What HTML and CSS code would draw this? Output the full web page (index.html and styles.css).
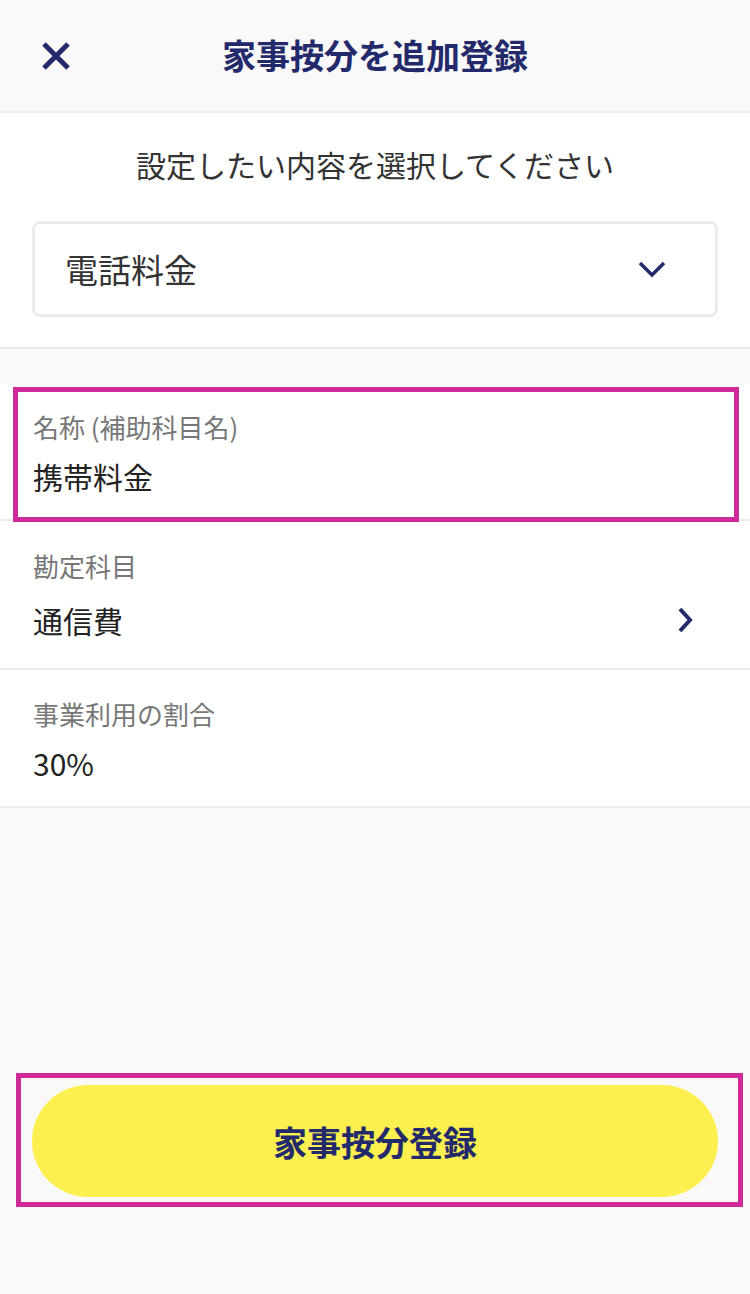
FILE: index.html
```html
<!DOCTYPE html>
<html lang="ja">
<head>
<meta charset="utf-8">
<title>家事按分を追加登録</title>
<link rel="stylesheet" href="styles.css">
</head>
<body>
<div class="page">
  <header class="header">
    <button class="close" aria-label="閉じる">
      <svg width="28" height="28" viewBox="0 0 28 28"><path d="M2 2 L26 26 M26 2 L2 26" stroke="#232a6b" stroke-width="5" stroke-linecap="butt" fill="none"/></svg>
    </button>
    <h1 class="title">家事按分を追加登録</h1>
  </header>

  <section class="select-section">
    <p class="prompt">設定したい内容を選択してください</p>
    <div class="select">
      <span class="select-value">電話料金</span>
      <svg class="chev-down" width="28" height="18" viewBox="0 0 28 18"><path d="M2 3 L14 15 L26 3" stroke="#232a6b" stroke-width="3.5" fill="none"/></svg>
    </div>
  </section>

  <section class="list">
    <div class="row">
      <div class="label">名称 (補助科目名)</div>
      <div class="value">携帯料金</div>
      <div class="highlight highlight-row"></div>
    </div>
    <div class="row row-link">
      <div class="label">勘定科目</div>
      <div class="value value-link">
        <span>通信費</span>
        <svg class="chev-right" width="16" height="26" viewBox="0 0 16 26"><path d="M3 2 L13 13 L3 24" stroke="#232a6b" stroke-width="4" fill="none"/></svg>
      </div>
    </div>
    <div class="row">
      <div class="label">事業利用の割合</div>
      <div class="value">30%</div>
    </div>
  </section>

  <div class="spacer"></div>

  <footer class="footer">
    <button class="submit">家事按分登録</button>
    <div class="highlight highlight-btn"></div>
  </footer>
</div>
</body>
</html>
```

FILE: styles.css
```css
* { box-sizing: border-box; }
html, body { margin: 0; padding: 0; }
body {
  background: #f9f9f9;
  font-family: "Noto Sans CJK JP", "Noto Sans", sans-serif;
  color: #222;
}
.page {
  width: 750px;
  height: 1294px;
  display: flex;
  flex-direction: column;
}
.header {
  position: relative;
  height: 113px;
  background: #f9f9f9;
  border-bottom: 2px solid #ececec;
  display: flex;
  align-items: center;
  justify-content: center;
}
.close {
  position: absolute;
  left: 42px;
  top: 42px;
  width: 28px;
  height: 28px;
  padding: 0;
  border: 0;
  background: none;
  display: block;
}
.close svg { display: block; }
.title {
  margin: 0;
  font-size: 34px;
  font-weight: 700;
  color: #232a6b;
  line-height: 44px;
  margin-top: -2px;
}
.select-section {
  background: #fff;
  padding: 29px 32px 30px;
  border-bottom: 2px solid #ececec;
}
.prompt {
  margin: 0;
  text-align: center;
  font-size: 30px;
  line-height: 44px;
  color: #333;
}
.select {
  margin-top: 35px;
  height: 96px;
  border: 3px solid #ececec;
  border-radius: 8px;
  display: flex;
  align-items: center;
  justify-content: space-between;
  padding: 0 49px 0 30px;
}
.select-value {
  font-size: 33px;
  line-height: 44px;
  color: #333;
}
.chev-down { display: block; }
.list {
  margin-top: 34px;
  background: #fff;
}
.row {
  position: relative;
  padding: 26px 32px 21px 33px;
  border-bottom: 2px solid #ececec;
}
.label {
  font-size: 26px;
  line-height: 36px;
  color: #777;
}
.value {
  margin-top: 9px;
  font-size: 30px;
  line-height: 44px;
  color: #222;
}
.row-link { padding-top: 27px; padding-bottom: 26px; }
.row-link .value { margin-top: 14px; }
.value-link {
  display: flex;
  align-items: center;
  justify-content: space-between;
  padding-right: 25px;
}
.chev-right { display: block; }
.spacer { flex: 1; }
.footer {
  position: relative;
  padding: 0 32px 97px;
}
.submit {
  display: block;
  width: 100%;
  height: 112px;
  border: 0;
  border-radius: 56px;
  background: #fcef50;
  font-family: "Noto Sans CJK JP", "Noto Sans", sans-serif;
  font-size: 34px;
  font-weight: 700;
  color: #232a6b;
  padding: 0;
}
.highlight {
  position: absolute;
  border: 5px solid #cf2b98;
  pointer-events: none;
}
.highlight-row {
  left: 13px;
  top: 4px;
  width: 726px;
  height: 135px;
}
.highlight-btn {
  left: 16px;
  top: -12px;
  width: 727px;
  height: 134px;
}
```
